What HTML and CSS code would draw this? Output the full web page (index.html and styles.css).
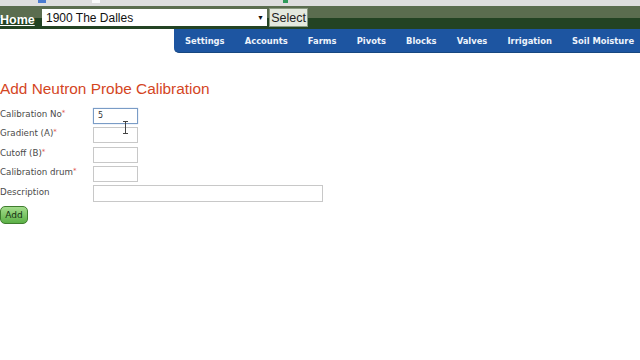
FILE: index.html
```html
<!DOCTYPE html>
<html>
<head>
    <title>Add Neutron Probe Calibration</title>
    <link rel="stylesheet" href="styles.css">
</head>
<body>
    <div class="chrome">
        <span class="chrome-icon blue"></span>
        <span class="chrome-icon white"></span>
        <span class="chrome-icon green"></span>
    </div>

    <div class="topbar">
        <a href="#" class="home">Home</a>
        <div class="farm-select">
            <span>1900 The Dalles</span>
            <span class="arrow">&#9660;</span>
        </div>
        <button class="select-btn">Select</button>
    </div>

    <div class="nav-row">
        <ul class="nav">
            <li>Settings</li>
            <li>Accounts</li>
            <li>Farms</li>
            <li>Pivots</li>
            <li>Blocks</li>
            <li>Valves</li>
            <li>Irrigation</li>
            <li>Soil Moisture</li>
        </ul>
    </div>

    <div class="content">
        <h2>Add Neutron Probe Calibration</h2>
        <form class="calib-form">
            <label>Calibration No<em>*</em></label>
            <div class="field"><input type="text" class="short focused" value="5"></div>
            <label>Gradient (A)<em>*</em></label>
            <div class="field"><input type="text" class="short"><span class="ibeam"></span></div>
            <label>Cutoff (B)<em>*</em></label>
            <div class="field"><input type="text" class="short"></div>
            <label>Calibration drum<em>*</em></label>
            <div class="field"><input type="text" class="short"></div>
            <label>Description</label>
            <div class="field"><input type="text" class="long"></div>
        </form>
        <button class="add-btn">Add</button>
    </div>
</body>
</html>
```

FILE: styles.css
```css
body {
    margin: 0;
    padding: 0;
    background: #fff;
    font-family: "DejaVu Sans", Verdana, sans-serif;
}
.chrome {
    height: 6px;
    background: #dedede;
    position: relative;
}
.chrome-icon {
    position: absolute;
    top: 0;
    width: 8px;
    height: 3px;
}
.chrome-icon.blue { left: 38px; background: #4a7bd0; }
.chrome-icon.white { left: 92px; background: #fafafa; }
.chrome-icon.green { left: 283px; width: 5px; background: #2f9a5a; }

.topbar {
    display: flex;
    align-items: center;
    height: 23px;
    background: linear-gradient(to bottom, #5b6d4f 0, #5b6d4f 12px, #234323 12px, #234323 100%);
}
.home {
    font-family: "Liberation Sans", Arial, sans-serif;
    font-weight: bold;
    font-size: 12.5px;
    color: #fff;
    text-decoration: underline;
    margin-top: 4px;
    width: 42px;
}
.farm-select {
    display: flex;
    justify-content: space-between;
    align-items: center;
    box-sizing: border-box;
    width: 225px;
    height: 17px;
    background: #fff;
    padding: 0 3px 0 4px;
    font-family: "Liberation Sans", Arial, sans-serif;
    font-size: 12px;
    color: #111;
}
.farm-select .arrow {
    font-size: 7px;
}
.select-btn {
    margin-left: 2px;
    height: 19px;
    width: 39px;
    padding: 0;
    background: #e4e9de;
    border: 1px solid #8a9a80;
    font-family: "Liberation Sans", Arial, sans-serif;
    font-size: 12.5px;
    color: #222;
}

.nav-row {
    display: flex;
    justify-content: flex-end;
}
.nav {
    display: flex;
    list-style: none;
    margin: 0;
    padding: 0 0 0 1px;
    width: 465px;
    height: 23px;
    align-items: center;
    background: #1d55a1;
    border-bottom: 1px solid #174780;
    border-radius: 0 0 0 5px;
}
.nav li {
    font-weight: bold;
    font-size: 8.4px;
    color: #eef3fb;
    padding: 0 10.05px;
    white-space: nowrap;
}

.content {
    padding-top: 27px;
}
.content h2 {
    margin: 0 0 5px 0;
    font-family: "Liberation Sans", Arial, sans-serif;
    font-weight: normal;
    font-size: 15.4px;
    color: #d4461f;
}
.calib-form {
    display: grid;
    grid-template-columns: 93px auto;
    row-gap: 3.5px;
    align-items: center;
}
.calib-form label {
    font-size: 8.7px;
    color: #4a4a4a;
    margin-top: 5px;
}
.calib-form em {
    font-style: normal;
    color: #e0524a;
    font-size: 7px;
    vertical-align: top;
}
.field {
    position: relative;
    height: 16px;
}
.field input {
    box-sizing: border-box;
    height: 16px;
    margin: 0;
    padding: 0 4px;
    border: 1px solid #c8c8c8;
    font-family: "DejaVu Sans", Verdana, sans-serif;
    font-size: 8px;
    color: #333;
}
.field input.short { width: 45px; }
.field input.long { width: 230px; height: 17px; }
.field input.focused {
    border-color: #7a9cc6;
    box-shadow: 0 0 1px #9ab8e0;
}
.ibeam {
    position: absolute;
    left: 32px;
    top: -2px;
    width: 1px;
    height: 13px;
    background: #444;
}
.ibeam::before,
.ibeam::after {
    content: "";
    position: absolute;
    left: -2px;
    width: 5px;
    height: 1px;
    background: #444;
}
.ibeam::before { top: 0; }
.ibeam::after { bottom: 0; }

.add-btn {
    display: block;
    box-sizing: border-box;
    margin-top: 9px;
    width: 28px;
    height: 18px;
    padding: 0;
    border: 1px solid #3f7d2e;
    border-radius: 5px;
    background: linear-gradient(to bottom, #a3dc8c, #5bb046);
    font-family: "DejaVu Sans", Verdana, sans-serif;
    font-size: 9px;
    color: #143010;
}
```
